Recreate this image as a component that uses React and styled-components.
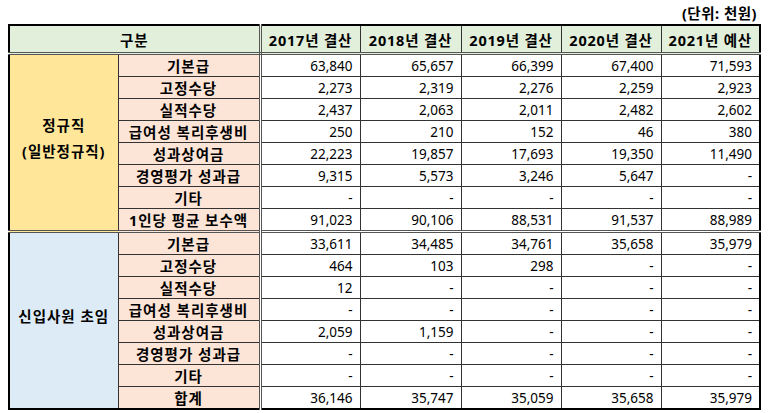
import React from "react";
import styled, { createGlobalStyle } from "styled-components";

const GlobalStyle = createGlobalStyle`
    body {
        margin:0;
        background:#fff;
        font-family:"Noto Sans","Noto Sans CJK KR",sans-serif;
        color:#000;
    }
`

const Page = styled.div`
    width:768px;
    padding:4px 8px 0 8px;
    box-sizing:border-box;
`
const UnitNote = styled.div`
    text-align:right;
    font-size:14.5px;
    font-weight:700;
    letter-spacing:0.5px;
    line-height:18px;
    padding-right:3px;
    margin-bottom:2px;
`
const Table = styled.table`
    width:751px;
    border-collapse:collapse;
    table-layout:fixed;
    border:2px solid #000;
    font-size:13.5px;
`
const Col = styled.col`
    width:${p => p.$w}px;
`
const HeadCell = styled.th`
    height:26px;
    padding:0;
    background:#e2efda;
    font-size:14.5px;
    font-weight:700;
    letter-spacing:0.8px;
    text-align:center;
    white-space:nowrap;
    border:1px solid #333;
    border-bottom:3px double #555;
    border-top:2px solid #000;
    ${p => p.$split && "border-right:3px double #555;"}
`
const GroupCell = styled.td`
    padding:0 0 10px 0;
    background:${p => p.$bg};
    font-size:14.5px;
    font-weight:700;
    letter-spacing:1px;
    text-align:center;
    line-height:26px;
    border:1px solid #333;
    ${p => p.$sectionStart && "border-top:3px double #555;"}
`
const ItemCell = styled.td`
    height:21px;
    padding:0;
    background:#fce4d6;
    font-size:14.5px;
    font-weight:700;
    letter-spacing:1px;
    text-align:center;
    white-space:nowrap;
    border:1px solid #333;
    border-right:3px double #555;
    ${p => p.$sectionStart && "border-top:3px double #555;"}
`
const NumCell = styled.td`
    padding:0 7px 0 0;
    background:#fff;
    text-align:right;
    border:1px solid #333;
    ${p => p.$sectionStart && "border-top:3px double #555;"}
`

const widths = [109, 142, 100, 101, 100, 100, 99]

const years = ["2017년 결산", "2018년 결산", "2019년 결산", "2020년 결산", "2021년 예산"]

const sections = [
    {
        label: ["정규직", "(일반정규직)"],
        bg: "#ffe699",
        rows: [
            ["기본급", "63,840", "65,657", "66,399", "67,400", "71,593"],
            ["고정수당", "2,273", "2,319", "2,276", "2,259", "2,923"],
            ["실적수당", "2,437", "2,063", "2,011", "2,482", "2,602"],
            ["급여성 복리후생비", "250", "210", "152", "46", "380"],
            ["성과상여금", "22,223", "19,857", "17,693", "19,350", "11,490"],
            ["경영평가 성과급", "9,315", "5,573", "3,246", "5,647", "-"],
            ["기타", "-", "-", "-", "-", "-"],
            ["1인당 평균 보수액", "91,023", "90,106", "88,531", "91,537", "88,989"],
        ],
    },
    {
        label: ["신입사원 초임"],
        bg: "#ddebf7",
        rows: [
            ["기본급", "33,611", "34,485", "34,761", "35,658", "35,979"],
            ["고정수당", "464", "103", "298", "-", "-"],
            ["실적수당", "12", "-", "-", "-", "-"],
            ["급여성 복리후생비", "-", "-", "-", "-", "-"],
            ["성과상여금", "2,059", "1,159", "-", "-", "-"],
            ["경영평가 성과급", "-", "-", "-", "-", "-"],
            ["기타", "-", "-", "-", "-", "-"],
            ["합계", "36,146", "35,747", "35,059", "35,658", "35,979"],
        ],
    },
]

const App = () => {
    return (
        <Page>
            <GlobalStyle />
            <UnitNote>(단위: 천원)</UnitNote>
            <Table>
                <colgroup>
                    {widths.map((w, i) => <Col key={i} $w={w} />)}
                </colgroup>
                <thead>
                    <tr>
                        <HeadCell colSpan={2} $split>구분</HeadCell>
                        {years.map(y => <HeadCell key={y}>{y}</HeadCell>)}
                    </tr>
                </thead>
                <tbody>
                    {sections.map((s, si) =>
                        s.rows.map((r, ri) => (
                            <tr key={si + "-" + ri}>
                                {ri === 0 && (
                                    <GroupCell rowSpan={s.rows.length} $bg={s.bg} $sectionStart={si > 0}>
                                        {s.label.map(l => <div key={l}>{l}</div>)}
                                    </GroupCell>
                                )}
                                <ItemCell $sectionStart={si > 0 && ri === 0}>{r[0]}</ItemCell>
                                {r.slice(1).map((v, vi) => (
                                    <NumCell key={vi} $sectionStart={si > 0 && ri === 0}>{v}</NumCell>
                                ))}
                            </tr>
                        ))
                    )}
                </tbody>
            </Table>
        </Page>
    )
}

export default App;
